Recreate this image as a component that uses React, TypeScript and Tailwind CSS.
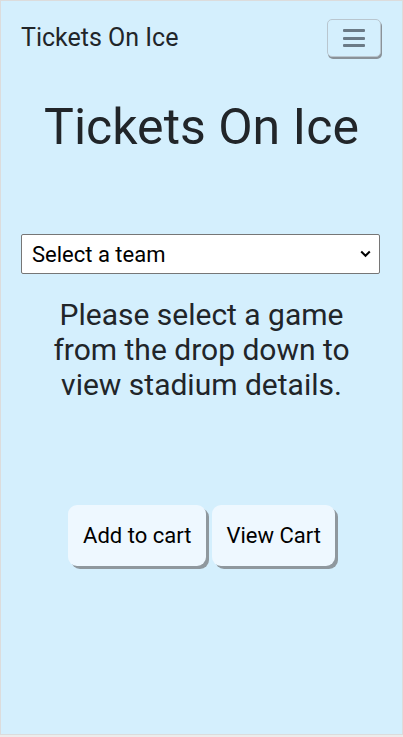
import React from "react";

export default function App() {
  return (
    <div className="w-[403px] h-[737px] bg-[#ececec]" style={{ fontFamily: "Roboto, 'Noto Sans', sans-serif" }}>
      <div className="h-[735px] border border-[#dcdcdc] bg-[#d4effd] text-[#212529] flex flex-col">
        <nav className="flex items-center justify-between pl-[20px] pr-[21px] pt-[18px]">
          <span className="text-[25px] leading-[38px]">Tickets On Ice</span>
          <button className="w-[54px] h-[38px] rounded-[5px] border border-[#b9c6cf] bg-[#d4effd] shadow-[1px_2px_0_#8a9299] flex flex-col items-center justify-center gap-[4.5px]">
            <span className="block w-[22px] h-[3px] bg-[#6b7a86] rounded-[1px]" />
            <span className="block w-[22px] h-[3px] bg-[#6b7a86] rounded-[1px]" />
            <span className="block w-[22px] h-[3px] bg-[#6b7a86] rounded-[1px]" />
          </button>
        </nav>
        <h1 className="text-center text-[50px] leading-[60px] mt-[40px]">Tickets On Ice</h1>
        <div className="pl-[20px] pr-[22px] mt-[77px]">
          <div className="relative h-[40px] bg-white border border-[#767676] rounded-[2px] flex items-center pl-[10px]">
            <span className="text-[22px] text-black">Select a team</span>
            <svg className="absolute right-[8px] top-[15px]" width="11" height="8" viewBox="0 0 11 8">
              <path d="M1.2 1.5 L5.5 5.8 L9.8 1.5" stroke="#000" strokeWidth="2" fill="none" />
            </svg>
          </div>
        </div>
        <p className="text-center text-[30px] leading-[35px] mt-[23px] px-[30px]">
          Please select a game from the drop down to view stadium details.
        </p>
        <div className="flex justify-center gap-[6px] mt-[103px]">
          <button className="h-[61px] px-[15px] rounded-[9px] bg-[#eef8ff] shadow-[3px_3px_0_#8f989e] text-[22px] text-black">Add to cart</button>
          <button className="h-[61px] px-[14px] rounded-[9px] bg-[#eef8ff] shadow-[3px_3px_0_#8f989e] text-[22px] text-black">View Cart</button>
        </div>
      </div>
    </div>
  );
}
